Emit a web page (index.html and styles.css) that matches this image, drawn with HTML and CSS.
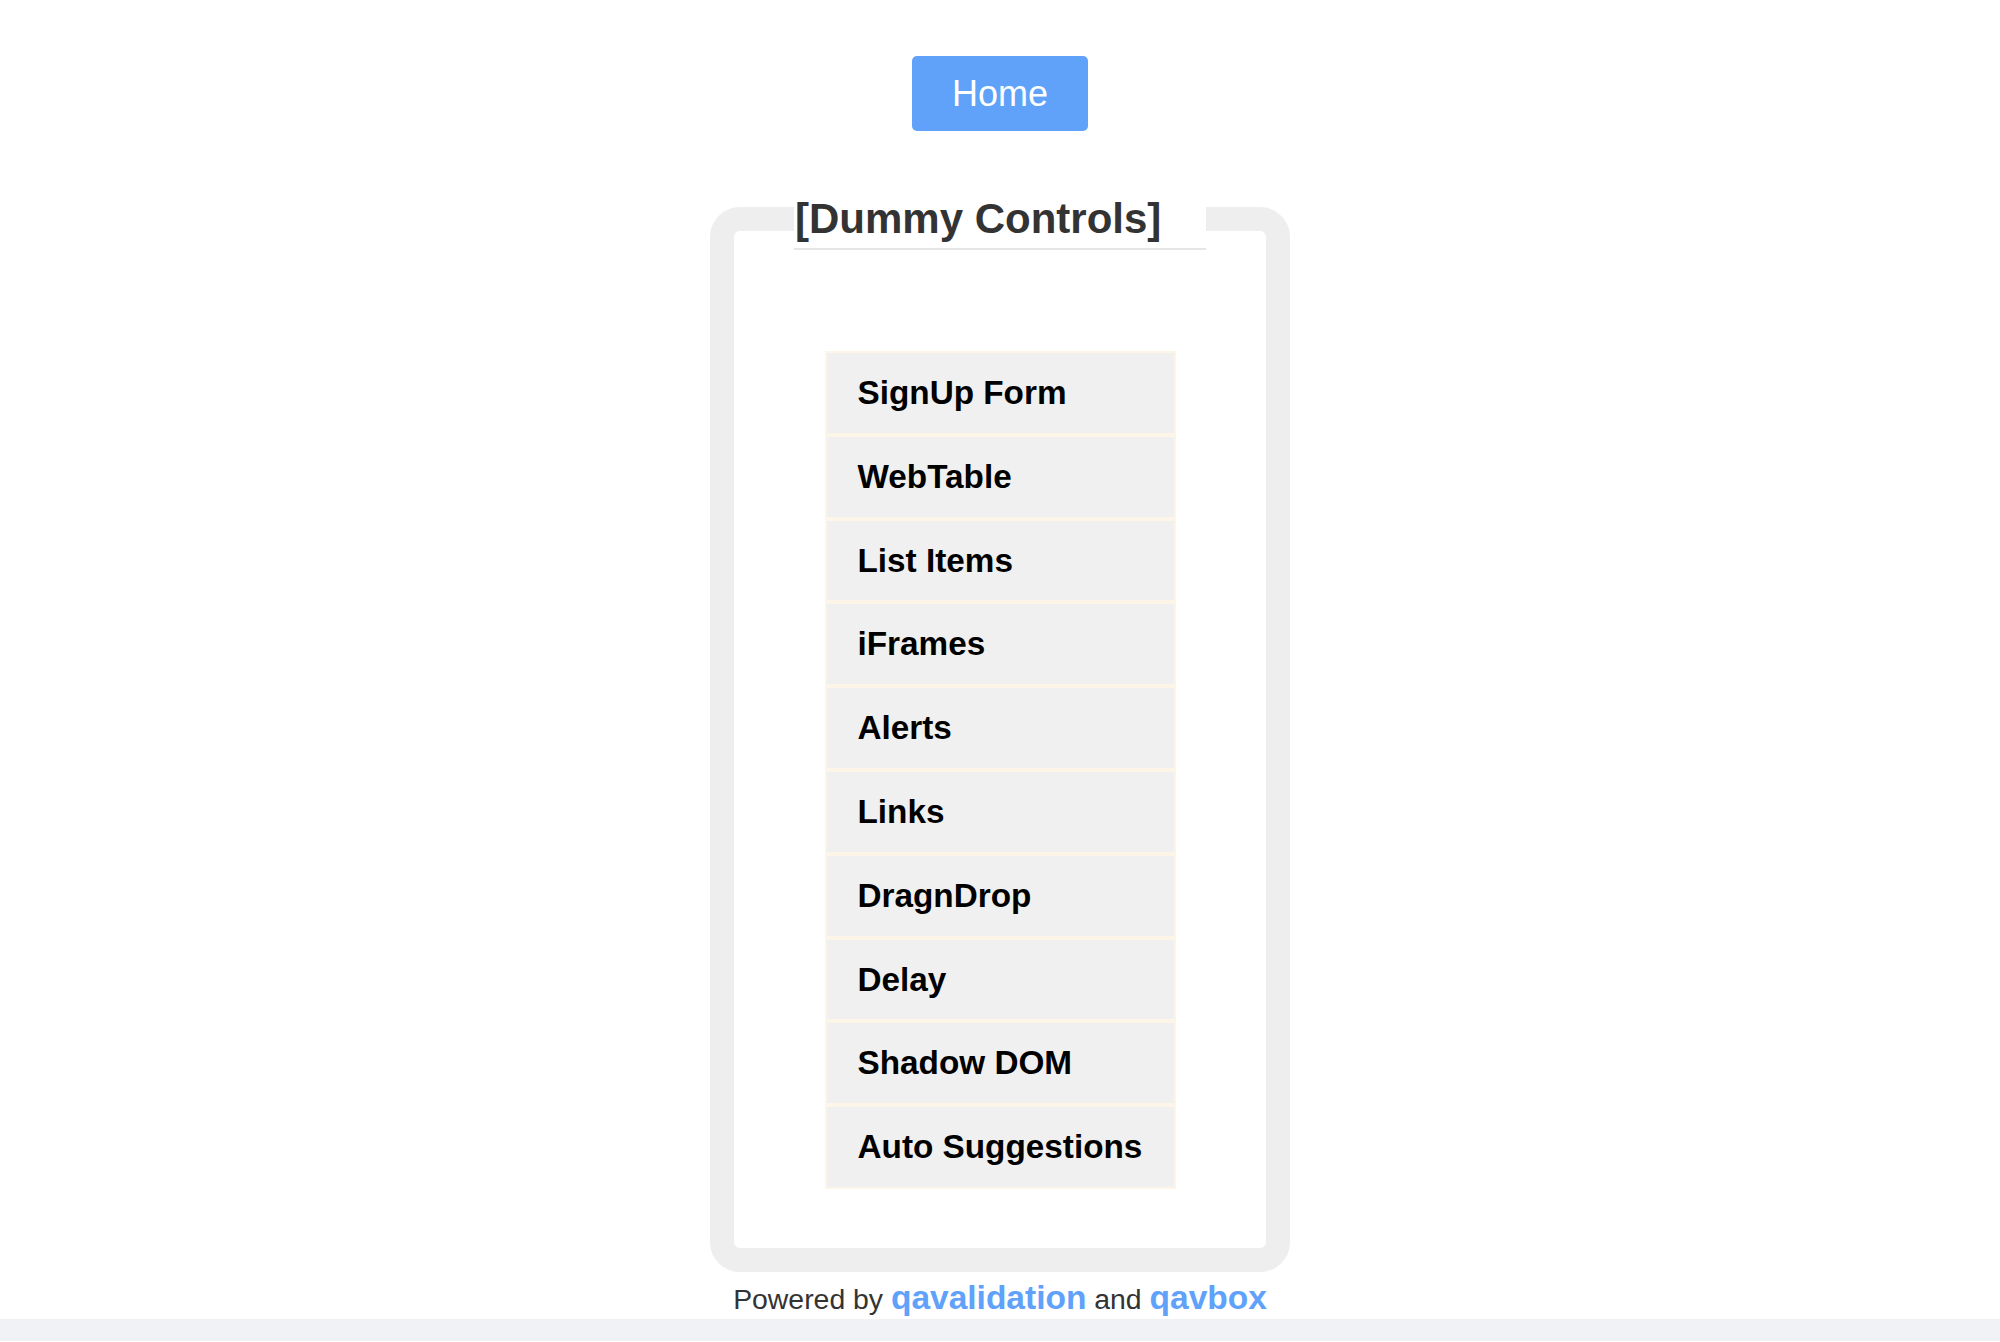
FILE: index.html
```html
<!DOCTYPE html>
<html lang="en">
<head>
<meta charset="utf-8">
<title>Dummy Controls</title>
<link rel="stylesheet" href="styles.css">
</head>
<body>
<div class="page">
  <a class="home-btn" href="#">Home</a>
  <fieldset class="panel">
    <legend class="panel-title">[Dummy Controls]</legend>
    <ul class="menu">
      <li class="menu-item">SignUp Form</li>
      <li class="menu-item">WebTable</li>
      <li class="menu-item">List Items</li>
      <li class="menu-item">iFrames</li>
      <li class="menu-item">Alerts</li>
      <li class="menu-item">Links</li>
      <li class="menu-item">DragnDrop</li>
      <li class="menu-item">Delay</li>
      <li class="menu-item">Shadow DOM</li>
      <li class="menu-item">Auto Suggestions</li>
    </ul>
  </fieldset>
  <div class="credits">Powered by <a class="credit-link" href="#">qavalidation</a> and <a class="credit-link" href="#">qavbox</a></div>
</div>
<div class="bottom-bar"></div>
</body>
</html>
```

FILE: styles.css
```css
html, body {
  margin: 0;
  padding: 0;
  background: #ffffff;
}

body {
  font-family: "Liberation Sans", Arial, Helvetica, sans-serif;
  color: #333333;
}

.page {
  display: flex;
  flex-direction: column;
  align-items: center;
  padding-top: 56px;
}

.home-btn {
  display: flex;
  align-items: center;
  justify-content: center;
  width: 176px;
  height: 75px;
  background: #60a1fa;
  color: #ffffff;
  font-size: 36px;
  text-decoration: none;
  border-radius: 5px;
}

.panel {
  box-sizing: border-box;
  width: 580px;
  margin: 57px 0 0 0;
  border: 24px solid #eeeeee;
  border-radius: 30px;
  padding: 101px 60px 59px 60px;
}

.panel-title {
  box-sizing: border-box;
  width: 412px;
  padding: 7px 0 5px 1px;
  font-size: 42px;
  line-height: 48px;
  font-weight: bold;
  color: #333333;
  border-bottom: 2px solid #e6e6e6;
}

.menu {
  list-style: none;
  margin: 0 auto;
  padding: 0;
  width: 351px;
}

.menu-item {
  box-sizing: border-box;
  height: 83.8px;
  background: #f0f0f0;
  border: 2px solid #fdf5e8;
  padding: 21px 30px 0 31px;
  font-size: 33.3px;
  line-height: 38px;
  font-weight: bold;
  color: #000000;
  white-space: nowrap;
}

.credits {
  margin-top: 8px;
  margin-bottom: 2px;
  font-size: 28.4px;
  line-height: 36px;
  color: #333333;
}

.credit-link {
  font-size: 33.5px;
  font-weight: bold;
  color: #60a1fa;
  text-decoration: none;
}

.bottom-bar {
  height: 22px;
  background: #f1f2f6;
}
```
